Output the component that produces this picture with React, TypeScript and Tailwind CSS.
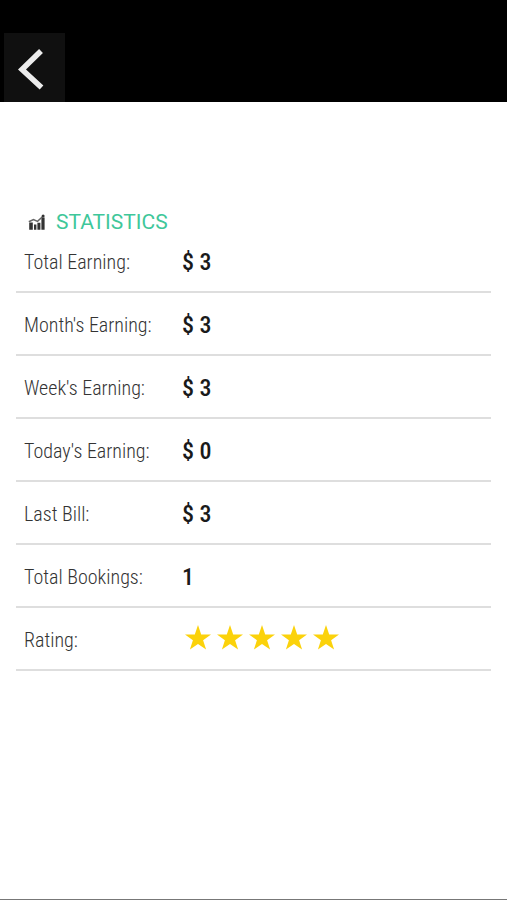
import type { ReactNode } from "react";

const stats = [
  { label: "Total Earning:", value: "$ 3" },
  { label: "Month's Earning:", value: "$ 3" },
  { label: "Week's Earning:", value: "$ 3" },
  { label: "Today's Earning:", value: "$ 0" },
  { label: "Last Bill:", value: "$ 3" },
  { label: "Total Bookings:", value: "1" },
];

const rating = 5;

function ChartIcon() {
  return (
    <svg className="w-[18px] h-[18px]" viewBox="0 0 18 18" fill="#333333" aria-hidden="true">
      <path d="M1.2 8.6h3.6v7.2H1.2zM6 10.4h2.4v5.4H6zM9.4 8.8h3v7h-3zM13.4 3.4h3.2v12.4h-3.2z" />
      <path d="M0.8 7.8L5.5 5.6L9.5 7.4L15 2.2" fill="none" stroke="#666666" strokeWidth="1.5" />
      <circle cx="15.1" cy="1.9" r="1.5" />
    </svg>
  );
}

function Star() {
  return (
    <svg className="w-8 h-8" viewBox="0 0 32 32" fill="#fbd20b" aria-hidden="true">
      <path d="M16 1L19.2 10.4H29L21.1 16.2L24.1 25.6L16 19.9L7.9 25.6L10.9 16.2L3 10.4H12.8Z" />
    </svg>
  );
}

function Row({ label, children }: { label: string; children: ReactNode }) {
  return (
    <div className="flex items-center h-[63px] pt-[3px] pl-2 border-b-2 border-[#dedede]">
      <dt className="w-[158px] shrink-0 text-xl text-[#333333] font-light">{label}</dt>
      <dd className="text-2xl text-[#1a1a1a] font-medium">{children}</dd>
    </div>
  );
}

export default function App() {
  return (
    <div className="min-h-screen flex flex-col bg-white border-b border-[#777777] font-['Roboto_Condensed','Roboto',sans-serif]">
      <header className="bg-black pt-[33px] pl-1">
        <button type="button" aria-label="Back" className="block w-[61px] h-[69px] bg-[#101010]">
          <svg className="w-full h-full" viewBox="0 0 61 69" fill="none" stroke="#ececec" strokeWidth="5.5">
            <path d="M37 18L18 36.5L37.5 54.5" />
          </svg>
        </button>
      </header>

      <main className="px-4 pt-[114px]">
        {/* Section title */}
        <div className="flex items-center gap-[10px] h-[14px] pl-3">
          <ChartIcon />
          <h1 className="text-[21px] text-[#3fc79a] font-['Roboto',sans-serif]">STATISTICS</h1>
        </div>

        <dl>
          {stats.map((s) => (
            <Row key={s.label} label={s.label}>
              {s.value}
            </Row>
          ))}
          <Row label="Rating:">
            <span className="flex" role="img" aria-label={`${rating} stars`}>
              {Array.from({ length: rating }, (_, i) => (
                <Star key={i} />
              ))}
            </span>
          </Row>
        </dl>
      </main>
    </div>
  );
}
